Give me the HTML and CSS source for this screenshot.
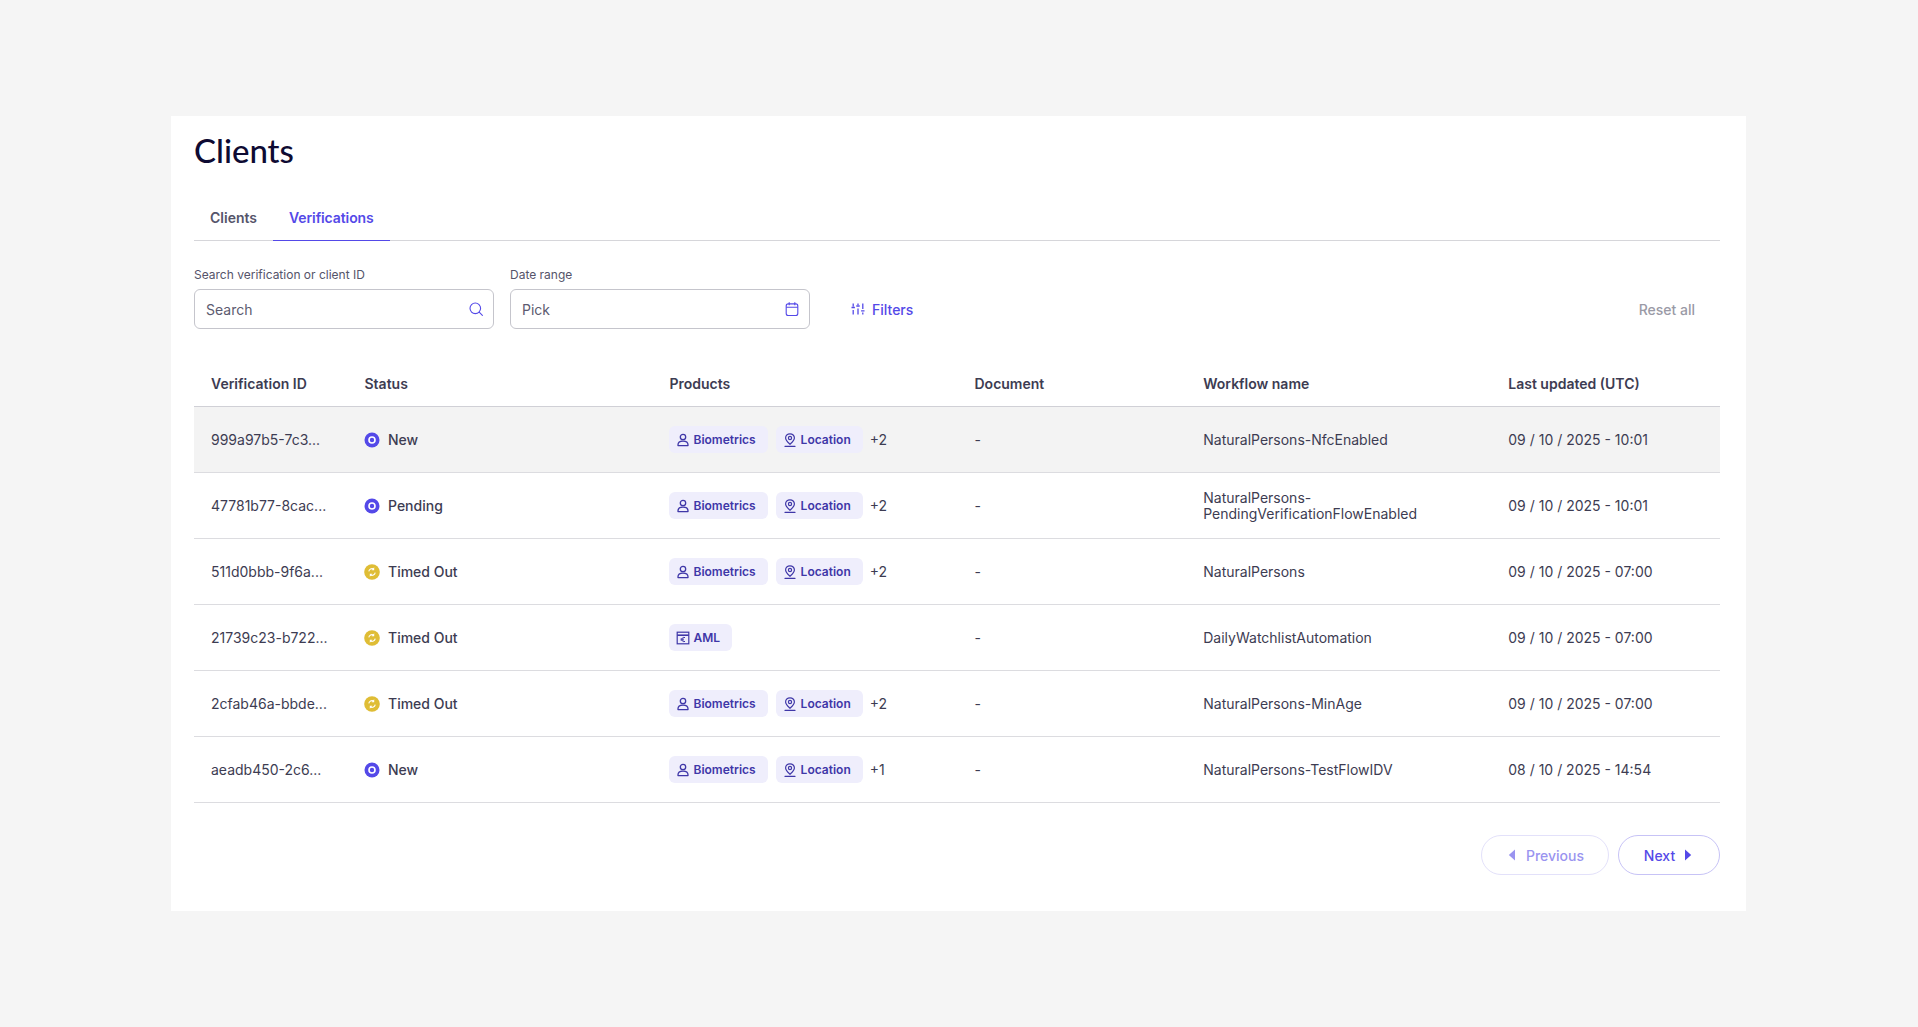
FILE: index.html
```html
<!DOCTYPE html>
<html lang="en">
<head>
<meta charset="utf-8">
<title>Clients</title>
<link rel="stylesheet" href="styles.css">
</head>
<body>
<svg class="defs" width="0" height="0" aria-hidden="true">
  <symbol id="i-person" viewBox="0 0 16 16"><circle cx="8" cy="5" r="2.7" fill="none" stroke="currentColor" stroke-width="1.3"/><path d="M3 13.6h10v-.8c0-2.2-1.9-3.6-5-3.6s-5 1.4-5 3.6z" fill="none" stroke="currentColor" stroke-width="1.3" stroke-linejoin="round"/></symbol>
  <symbol id="i-pin" viewBox="0 0 16 16"><path d="M8 1.8c-2.6 0-4.4 1.9-4.4 4.2 0 2.6 2.6 4.6 4.4 6.2 1.8-1.6 4.4-3.6 4.4-6.2 0-2.3-1.8-4.2-4.4-4.2z" fill="none" stroke="currentColor" stroke-width="1.2"/><circle cx="8" cy="6" r="1.6" fill="none" stroke="currentColor" stroke-width="1.2"/><path d="M3 14.3h10" stroke="currentColor" stroke-width="1.3" stroke-linecap="round"/></symbol>
  <symbol id="i-aml" viewBox="0 0 16 16"><rect x="2.2" y="2.2" width="11.6" height="11.6" fill="none" stroke="currentColor" stroke-width="1.2"/><path d="M2.2 5.2h11.6" stroke="currentColor" stroke-width="1.6"/><path d="M10 7.6c-1.8-.7-3.1.2-3.1 1.9s1.3 2.6 3.1 1.9M5.6 9h3.2M5.6 10h3.2" fill="none" stroke="currentColor" stroke-width="1"/></symbol>
  <symbol id="i-new" viewBox="0 0 16 16"><circle cx="8" cy="8" r="7.5" fill="#5449e8"/><circle cx="8" cy="8" r="3" fill="none" stroke="#fff" stroke-width="1.6"/></symbol>
  <symbol id="i-timed" viewBox="0 0 16 16"><circle cx="8" cy="8" r="7.8" fill="#dfbd35"/><path d="M4.8 7.4A3.3 3.3 0 0 1 9.6 5M11.2 8.6A3.3 3.3 0 0 1 6.4 11" fill="none" stroke="#fff" stroke-width="1.1"/><path d="M10.2 3.2v3H7.6zM5.8 12.8v-3h2.6z" fill="#fff"/></symbol>
</svg>

<main class="card">
  <h1 class="title">Clients</h1>

  <nav class="tabs">
    <a class="tab">Clients</a>
    <a class="tab tab-active">Verifications</a>
  </nav>

  <section class="filters">
    <div class="field">
      <label class="field-label">Search verification or client ID</label>
      <div class="input">
        <span>Search</span>
        <svg class="input-icon" viewBox="0 0 16 16" fill="none" stroke="currentColor" stroke-width="1.1"><circle cx="7.3" cy="7.3" r="5.3"/><path d="M11.2 11.2l3.2 3.2" stroke-linecap="round"/></svg>
      </div>
    </div>
    <div class="field">
      <label class="field-label">Date range</label>
      <div class="input">
        <span>Pick</span>
        <svg class="input-icon" viewBox="0 0 16 16" fill="none" stroke="currentColor" stroke-width="1.1"><rect x="2.2" y="2.9" width="11.6" height="11.6" rx="2"/><path d="M2.2 6.3h11.6M5.2 1.2v3M10.8 1.2v3"/></svg>
      </div>
    </div>
    <button class="filter-btn">
      <svg class="filter-icon" viewBox="0 0 14 14" fill="none" stroke="currentColor" stroke-width="1.3"><path d="M2.2 1.5v3M2.2 8v4.5M7 1.5v1.5M7 6.5v6M11.8 1.5v5.5M11.8 10.5v2M.5 5.5h3.4M5.3 4h3.4M10.1 8.8h3.4"/></svg>
      Filters
    </button>
    <button class="reset-btn">Reset all</button>
  </section>

  <section class="table">
    <div class="row head">
      <div class="cell">Verification ID</div>
      <div class="cell">Status</div>
      <div class="cell">Products</div>
      <div class="cell">Document</div>
      <div class="cell">Workflow name</div>
      <div class="cell">Last updated (UTC)</div>
    </div>

    <div class="row hovered">
      <div class="cell">999a97b5-7c3...</div>
      <div class="cell status"><svg class="status-icon"><use href="#i-new"/></svg>New</div>
      <div class="cell products">
        <span class="chip"><svg class="chip-icon"><use href="#i-person"/></svg>Biometrics</span>
        <span class="chip"><svg class="chip-icon"><use href="#i-pin"/></svg>Location</span>
        <span class="more">+2</span>
      </div>
      <div class="cell">-</div>
      <div class="cell">NaturalPersons-NfcEnabled</div>
      <div class="cell">09 / 10 / 2025 - 10:01</div>
    </div>

    <div class="row">
      <div class="cell">47781b77-8cac...</div>
      <div class="cell status"><svg class="status-icon"><use href="#i-new"/></svg>Pending</div>
      <div class="cell products">
        <span class="chip"><svg class="chip-icon"><use href="#i-person"/></svg>Biometrics</span>
        <span class="chip"><svg class="chip-icon"><use href="#i-pin"/></svg>Location</span>
        <span class="more">+2</span>
      </div>
      <div class="cell">-</div>
      <div class="cell">NaturalPersons-<br>PendingVerificationFlowEnabled</div>
      <div class="cell">09 / 10 / 2025 - 10:01</div>
    </div>

    <div class="row">
      <div class="cell">511d0bbb-9f6a...</div>
      <div class="cell status"><svg class="status-icon"><use href="#i-timed"/></svg>Timed Out</div>
      <div class="cell products">
        <span class="chip"><svg class="chip-icon"><use href="#i-person"/></svg>Biometrics</span>
        <span class="chip"><svg class="chip-icon"><use href="#i-pin"/></svg>Location</span>
        <span class="more">+2</span>
      </div>
      <div class="cell">-</div>
      <div class="cell">NaturalPersons</div>
      <div class="cell">09 / 10 / 2025 - 07:00</div>
    </div>

    <div class="row">
      <div class="cell">21739c23-b722...</div>
      <div class="cell status"><svg class="status-icon"><use href="#i-timed"/></svg>Timed Out</div>
      <div class="cell products">
        <span class="chip"><svg class="chip-icon"><use href="#i-aml"/></svg>AML</span>
      </div>
      <div class="cell">-</div>
      <div class="cell">DailyWatchlistAutomation</div>
      <div class="cell">09 / 10 / 2025 - 07:00</div>
    </div>

    <div class="row">
      <div class="cell">2cfab46a-bbde...</div>
      <div class="cell status"><svg class="status-icon"><use href="#i-timed"/></svg>Timed Out</div>
      <div class="cell products">
        <span class="chip"><svg class="chip-icon"><use href="#i-person"/></svg>Biometrics</span>
        <span class="chip"><svg class="chip-icon"><use href="#i-pin"/></svg>Location</span>
        <span class="more">+2</span>
      </div>
      <div class="cell">-</div>
      <div class="cell">NaturalPersons-MinAge</div>
      <div class="cell">09 / 10 / 2025 - 07:00</div>
    </div>

    <div class="row">
      <div class="cell">aeadb450-2c6...</div>
      <div class="cell status"><svg class="status-icon"><use href="#i-new"/></svg>New</div>
      <div class="cell products">
        <span class="chip"><svg class="chip-icon"><use href="#i-person"/></svg>Biometrics</span>
        <span class="chip"><svg class="chip-icon"><use href="#i-pin"/></svg>Location</span>
        <span class="more">+1</span>
      </div>
      <div class="cell">-</div>
      <div class="cell">NaturalPersons-TestFlowIDV</div>
      <div class="cell">08 / 10 / 2025 - 14:54</div>
    </div>
  </section>

  <footer class="pager">
    <button class="page-btn prev"><svg class="caret" viewBox="0 0 8 12"><path d="M7 .5v11L.8 6z" fill="currentColor"/></svg>Previous</button>
    <button class="page-btn next">Next<svg class="caret" viewBox="0 0 8 12"><path d="M1 .5v11L7.2 6z" fill="currentColor"/></svg></button>
  </footer>
</main>
</body>
</html>
```

FILE: styles.css
```css
* { box-sizing: border-box; }
html, body { margin: 0; padding: 0; }
body {
  height: 1027px;
  overflow: hidden;
  background: #f5f5f5;
  font-family: Inter, "Liberation Sans", sans-serif;
  color: #3d3c52;
  font-size: 14px;
  padding: 116px 0 0 171px;
}
.defs { position: absolute; }
.card {
  width: 1575px;
  height: 795px;
  background: #fff;
  padding: 13px 26px 0 23px;
}
.title {
  margin: 0;
  font-family: Lato, Inter, sans-serif;
  font-size: 33px;
  line-height: 42px;
  font-weight: 500;
  color: #0e0b33;
}
.tabs {
  display: flex;
  margin-top: 26px;
  height: 44px;
  border-bottom: 1px solid #d6d6da;
}
.tab {
  padding: 0 16px;
  height: 44px;
  line-height: 42px;
  font-weight: 600;
  color: #55546a;
}
.tab-active {
  color: #5449e8;
  letter-spacing: -0.1px;
  border-bottom: 1px solid #5449e8;
}
.filters {
  display: flex;
  align-items: flex-end;
  gap: 16px;
  margin-top: 26px;
}
.field { display: flex; flex-direction: column; width: 300px; }
.field-label {
  font-size: 12px;
  line-height: 16px;
  margin-bottom: 6px;
  color: #55546a;
}
.input {
  display: flex;
  align-items: center;
  justify-content: space-between;
  height: 40px;
  padding: 0 9px 0 11px;
  border: 1px solid #c5c5cc;
  border-radius: 6px;
  color: #5c5b70;
}
.input-icon { width: 16px; height: 16px; color: #5449e8; }
.filter-btn, .reset-btn, .page-btn {
  font-family: inherit;
  font-size: 14px;
  font-weight: 500;
  background: none;
  border: 0;
  cursor: pointer;
}
.filter-btn {
  display: flex;
  align-items: center;
  gap: 7px;
  height: 40px;
  margin-left: 25px;
  padding: 0;
  color: #5449e8;
}
.filter-icon { width: 14px; height: 14px; }
.reset-btn {
  margin-left: auto;
  height: 40px;
  padding: 0 25px 0 0;
  color: #9a9aa6;
}
.table { margin-top: 32px; }
.row {
  display: grid;
  grid-template-columns: 153.5px 4fr 4fr 3fr 4fr 3fr;
  height: 66px;
  border-bottom: 1px solid #dcdce0;
}
.row.head {
  height: 46px;
  font-weight: 600;
  border-bottom-color: #d0d0d6;
}
.row.hovered { background: #f3f3f3; }
.cell {
  display: flex;
  flex-wrap: wrap;
  align-items: center;
  align-content: center;
  padding: 0 17px;
  line-height: 16px;
}
.head .cell { color: #3d3c52; }
.status { font-weight: 500; flex-wrap: nowrap; gap: 8px; padding-left: 16.5px; }
.status-icon { width: 16px; height: 16px; flex: none; }
.products { flex-wrap: nowrap; gap: 8px; padding-left: 16px; }
.chip {
  display: inline-flex;
  align-items: center;
  gap: 3px;
  height: 27px;
  padding: 0 12px 0 6px;
  border-radius: 6px;
  background: #efeefc;
  color: #3f37a8;
  font-size: 12px;
  font-weight: 600;
}
.chip-icon { width: 16px; height: 16px; }
.more { margin-left: -1px; }
.pager {
  display: flex;
  justify-content: flex-end;
  gap: 9px;
  margin-top: 32px;
}
.page-btn {
  display: flex;
  align-items: center;
  justify-content: center;
  gap: 10px;
  height: 40px;
  border-radius: 20px;
  background: #fff;
}
.prev {
  width: 128px;
  padding: 0 6px 0 8px;
  color: #9a94f0;
  border: 1px solid #e3e1fa;
}
.next {
  width: 102px;
  gap: 9px;
  padding: 0 8px 0 6px;
  color: #5449e8;
  border: 1px solid #c7c3f6;
}
.caret { width: 8px; height: 12px; }
```
